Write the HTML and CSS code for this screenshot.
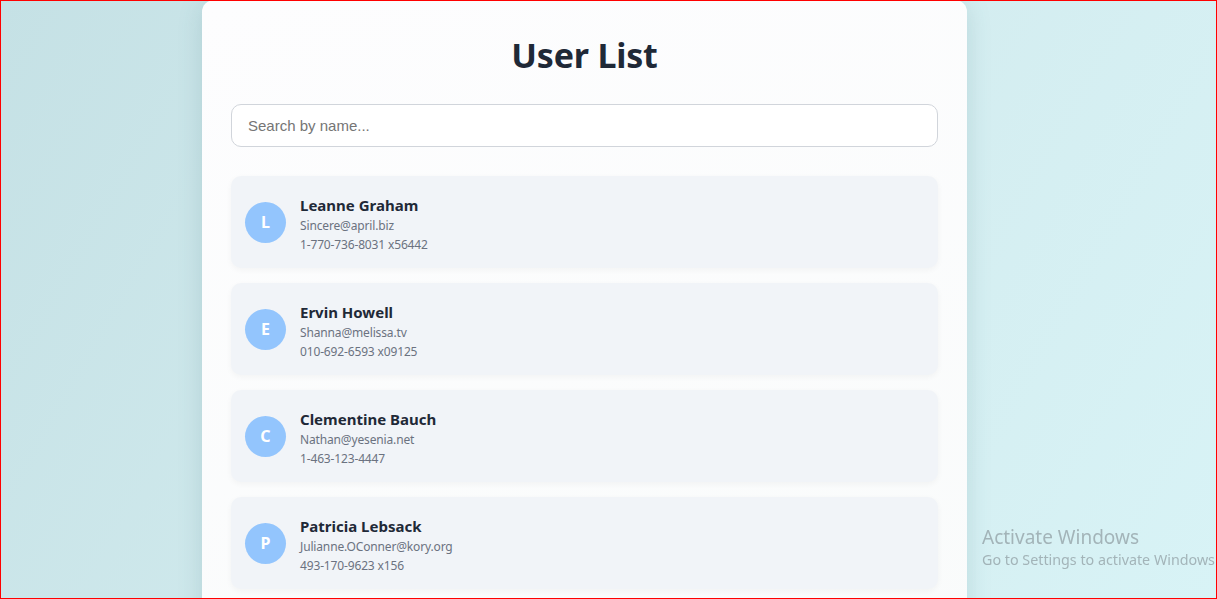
FILE: index.html
```html
<!DOCTYPE html>
<html lang="en">
<head>
<meta charset="utf-8">
<title>User List</title>
<link rel="stylesheet" href="styles.css">
</head>
<body>
<div class="page">
  <main class="panel">
    <h1 class="title">User List</h1>
    <input class="search" type="text" placeholder="Search by name...">
    <ul class="users">
      <li class="user">
        <div class="avatar">L</div>
        <div class="info">
          <div class="name">Leanne Graham</div>
          <div class="meta">Sincere@april.biz</div>
          <div class="meta">1-770-736-8031 x56442</div>
        </div>
      </li>
      <li class="user">
        <div class="avatar">E</div>
        <div class="info">
          <div class="name">Ervin Howell</div>
          <div class="meta">Shanna@melissa.tv</div>
          <div class="meta">010-692-6593 x09125</div>
        </div>
      </li>
      <li class="user">
        <div class="avatar">C</div>
        <div class="info">
          <div class="name">Clementine Bauch</div>
          <div class="meta">Nathan@yesenia.net</div>
          <div class="meta">1-463-123-4447</div>
        </div>
      </li>
      <li class="user">
        <div class="avatar">P</div>
        <div class="info">
          <div class="name">Patricia Lebsack</div>
          <div class="meta">Julianne.OConner@kory.org</div>
          <div class="meta">493-170-9623 x156</div>
        </div>
      </li>
    </ul>
  </main>
</div>
<div class="watermark">
  <div class="wm-title">Activate Windows</div>
  <div class="wm-sub">Go to Settings to activate Windows</div>
</div>
<div class="frame"></div>
</body>
</html>
```
FILE: styles.css
```css
html, body {
  margin: 0;
  padding: 0;
  height: 100%;
  overflow: hidden;
}
body {
  background: linear-gradient(120deg, #c5e1e5 0%, #d3ecef 55%, #d8f3f6 100%);
  font-family: "Noto Sans", "Open Sans", sans-serif;
  color: #1f2937;
}
.page {
  display: flex;
  justify-content: center;
  padding-right: 48px;
}
.panel {
  width: 707px;
  min-height: 640px;
  padding: 33px 29px 40px;
  background: linear-gradient(160deg, #fdfdfe 0%, #f9fbfb 100%);
  border-radius: 12px;
  box-shadow: 0 4px 24px rgba(60, 110, 120, 0.18);
}
.title {
  margin: 0 0 27px;
  font-size: 34px;
  line-height: 44px;
  font-weight: 700;
  text-align: center;
  color: #1f2937;
  letter-spacing: -0.2px;
}
.search {
  display: block;
  box-sizing: border-box;
  width: 100%;
  height: 43px;
  padding: 0 16px;
  border: 1px solid #d1d5db;
  border-radius: 10px;
  background: #ffffff;
  font-family: "Liberation Sans", Arial, sans-serif;
  font-size: 15px;
  color: #333;
  outline: none;
}
.search::placeholder {
  color: #757575;
}
.users {
  list-style: none;
  margin: 29px 0 0;
  padding: 0;
  display: flex;
  flex-direction: column;
  gap: 15px;
}
.user {
  display: flex;
  align-items: center;
  gap: 14px;
  box-sizing: border-box;
  height: 92px;
  padding: 14px;
  background: #f1f4f8;
  border-radius: 10px;
  box-shadow: 0 2px 6px rgba(0, 0, 0, 0.04);
}
.avatar {
  flex: none;
  width: 41px;
  height: 41px;
  border-radius: 50%;
  background: #93c5fd;
  color: #ffffff;
  font-weight: 700;
  font-size: 16px;
  display: flex;
  align-items: center;
  justify-content: center;
}
.info {
  padding-top: 5px;
  display: flex;
  flex-direction: column;
}
.name {
  font-size: 15px;
  line-height: 20px;
  font-weight: 700;
  color: #1f2937;
  margin-bottom: 1px;
}
.meta {
  font-size: 12px;
  line-height: 19px;
  letter-spacing: -0.15px;
  color: #6b7280;
}
.watermark {
  position: fixed;
  left: 982px;
  top: 524px;
  color: rgba(120, 130, 135, 0.55);
  font-family: "Noto Sans", "Open Sans", sans-serif;
  white-space: nowrap;
  pointer-events: none;
}
.wm-title {
  font-size: 19px;
  line-height: 26px;
}
.wm-sub {
  font-size: 14.3px;
  line-height: 20px;
}
.frame {
  position: fixed;
  inset: 0;
  border: 1px solid #ff0000;
  pointer-events: none;
}
```
